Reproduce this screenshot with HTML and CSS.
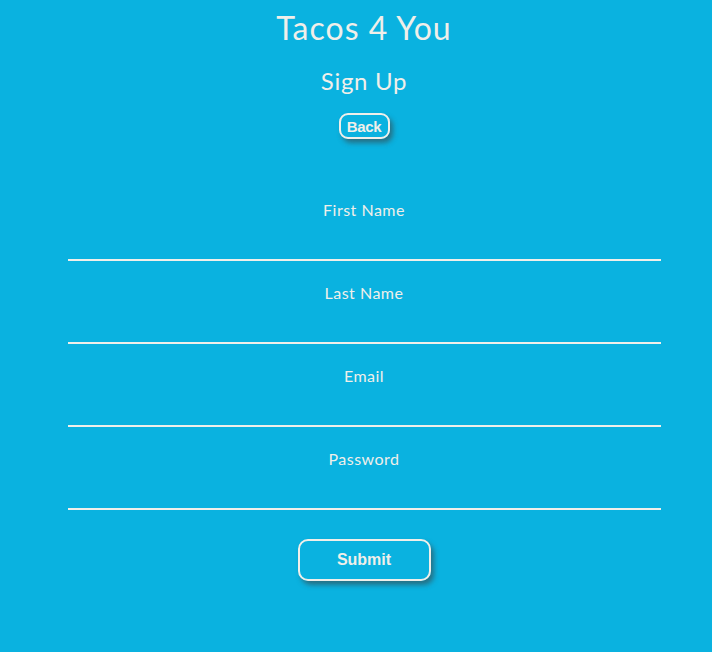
FILE: index.html
```html
<!DOCTYPE html>
<html>
<head>
<meta charset="utf-8">
<link rel="stylesheet" href="styles.css">
</head>
<body>
<main class="page">
  <h1 class="title">Tacos 4 You</h1>
  <h2 class="subtitle">Sign Up</h2>
  <button class="btn btn-back" type="button">Back</button>
  <form class="form">
    <div class="field">
      <label class="label" for="first">First Name</label>
      <input class="input" id="first" type="text">
    </div>
    <div class="field">
      <label class="label" for="last">Last Name</label>
      <input class="input" id="last" type="text">
    </div>
    <div class="field">
      <label class="label" for="email">Email</label>
      <input class="input" id="email" type="email">
    </div>
    <div class="field">
      <label class="label" for="pw">Password</label>
      <input class="input" id="pw" type="password">
    </div>
    <button class="btn btn-submit" type="submit">Submit</button>
  </form>
</main>
</body>
</html>
```
FILE: styles.css
```css
html, body {
  margin: 0;
  padding: 0;
  background: #0ab2e0;
}
body {
  font-family: "Lato", "Open Sans", sans-serif;
  color: #f0efea;
  height: 652px;
  overflow: hidden;
}
.page {
  display: flex;
  flex-direction: column;
  align-items: center;
  padding-left: 16px;
}
.title {
  margin: 8px 0 0;
  font-size: 32px;
  line-height: 40px;
  font-weight: 400;
  letter-spacing: 1px;
}
.subtitle {
  margin: 18px 0 0;
  font-size: 24px;
  line-height: 30px;
  font-weight: 400;
  letter-spacing: 0.7px;
}
.btn {
  font-family: "Liberation Sans", Arial, sans-serif;
  font-weight: bold;
  color: #f0efea;
  background: transparent;
  border: 2px solid #f0efea;
  border-radius: 9px;
  box-shadow: 3px 4px 5px rgba(60, 60, 60, 0.55);
  cursor: pointer;
}
.btn-back {
  margin-top: 17px;
  width: 51px;
  height: 26px;
  padding: 0;
  font-size: 15px;
  letter-spacing: -0.3px;
}
.form {
  width: 593px;
  margin-top: 62px;
  display: flex;
  flex-direction: column;
  align-items: center;
}
.field {
  width: 100%;
  display: flex;
  flex-direction: column;
  margin-bottom: 23px;
}
.label {
  text-align: center;
  font-size: 16px;
  line-height: 18px;
  letter-spacing: 0.5px;
}
.input {
  height: 42px;
  box-sizing: border-box;
  background: transparent;
  border: none;
  border-bottom: 2px solid #f0efea;
  outline: none;
  color: #f0efea;
}
.btn-submit {
  margin-top: 6px;
  width: 133px;
  height: 42px;
  font-size: 16px;
  border-radius: 10px;
}
```
